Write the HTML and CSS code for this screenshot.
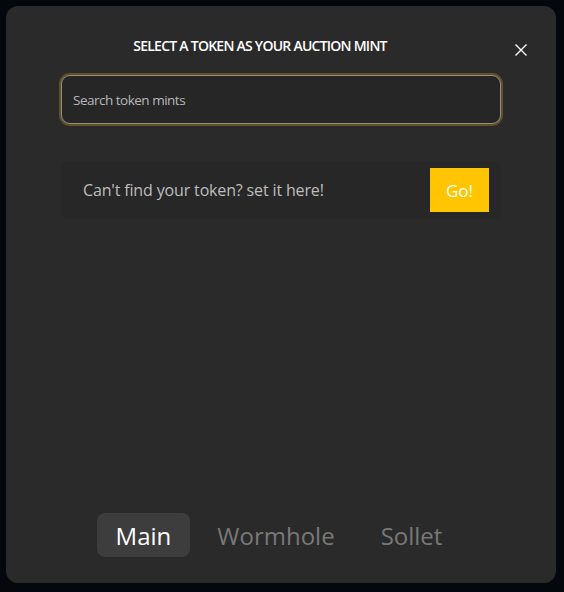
FILE: index.html
```html
<!DOCTYPE html>
<html>
<head>
<meta charset="utf-8">
<link rel="stylesheet" href="styles.css">
</head>
<body>
<div class="modal">
  <div class="header">
    <h2 class="title">SELECT A TOKEN AS YOUR AUCTION MINT</h2>
    <button class="close" aria-label="Close">
      <svg width="14" height="14" viewBox="0 0 14 14"><path d="M1.5 1.5 L12.5 12.5 M12.5 1.5 L1.5 12.5" stroke="#fff" stroke-width="1.4" fill="none"/></svg>
    </button>
  </div>
  <div class="search-wrap">
    <input class="search" type="text" placeholder="Search token mints">
  </div>
  <div class="card">
    <span class="card-text">Can't find your token? set it here!</span>
    <button class="go">Go!</button>
  </div>
  <div class="tabs">
    <button class="tab active">Main</button>
    <button class="tab">Wormhole</button>
    <button class="tab">Sollet</button>
  </div>
</div>
</body>
</html>
```
FILE: styles.css
```css
html, body {
  margin: 0;
  padding: 0;
  background: #04080c;
}
body {
  padding: 6px 8px 9px 6px;
  height: 592px;
  box-sizing: border-box;
  font-family: "Open Sans", "Noto Sans", sans-serif;
}
.modal {
  background: #2a2a2a;
  border-radius: 12px;
  height: 100%;
  box-sizing: border-box;
  display: flex;
  flex-direction: column;
  padding: 0 55px 0 55px;
}
.header {
  position: relative;
  display: flex;
  justify-content: center;
  padding-top: 31px;
  padding-right: 42px;
}
.title {
  margin: 0;
  color: #fff;
  font-size: 14px;
  font-weight: 600;
  letter-spacing: -0.75px;
  line-height: 18px;
}
.close {
  position: absolute;
  right: -27px;
  top: 37px;
  background: none;
  border: 0;
  padding: 0;
  width: 14px;
  height: 14px;
  display: flex;
}
.search-wrap {
  margin-top: 20px;
}
.search {
  width: 100%;
  box-sizing: border-box;
  height: 49px;
  background: #262626;
  border: 1px solid #8f8f88;
  border-radius: 9px;
  box-shadow: 0 0 0 2px #5e5324;
  outline: none;
  padding: 0 11px;
  font-family: inherit;
  font-size: 13.5px;
  letter-spacing: -0.5px;
  color: #ddd;
}
.search::placeholder {
  color: #b8b8b8;
}
.card {
  margin-top: 37px;
  background: #272727;
  border-radius: 8px;
  height: 58px;
  display: flex;
  align-items: center;
  justify-content: space-between;
  padding: 0 12px 0 22px;
}
.card-text {
  color: #bdbdbd;
  font-size: 16px;
  letter-spacing: -0.15px;
}
.go {
  background: #ffc500;
  border: 0;
  color: #fff;
  font-family: inherit;
  font-size: 17px;
  width: 59px;
  height: 44px;
  padding: 0;
}
.tabs {
  margin-top: auto;
  margin-bottom: 26px;
  display: flex;
  justify-content: center;
  gap: 8px;
  padding-right: 4px;
}
.tab {
  background: none;
  border: 0;
  border-radius: 8px;
  font-family: inherit;
  font-size: 24px;
  color: #787878;
  height: 44px;
  padding: 0 19px;
}
.tab.active {
  background: #3d3d3d;
  color: #fff;
}
```
